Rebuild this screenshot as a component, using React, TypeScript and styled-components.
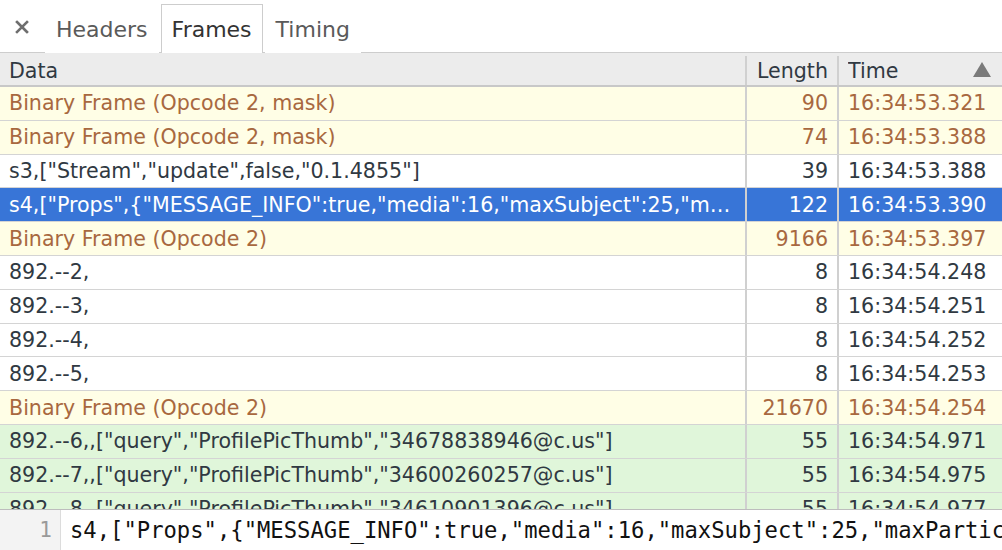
import React from "react";
import styled, { createGlobalStyle } from "styled-components";

const Global = createGlobalStyle`
  html, body { margin: 0; padding: 0; background: #fff; }
  body { font-family: "DejaVu Sans", "Liberation Sans", sans-serif; overflow: hidden; }
  #root { width: 1002px; height: 550px; }
`;

const Page = styled.div`
  width: 1002px;
  height: 550px;
  display: flex;
  flex-direction: column;
  overflow: hidden;
  background: #fff;
`;

const TabBar = styled.div`
  height: 52px;
  flex: none;
  display: flex;
  align-items: flex-end;
  border-bottom: 1px solid #cdcdcd;
  padding-left: 12px;
`;

const Close = styled.div`
  width: 20px;
  height: 49px;
  display: flex;
  align-items: center;
  justify-content: center;
  color: #6e6e6e;
  margin-right: 13px;
  padding-bottom: 1px;
  box-sizing: border-box;
  svg { display: block; }
`;

const Tab = styled.div<{ $active?: boolean }>`
  height: 49px;
  box-sizing: border-box;
  display: flex;
  align-items: center;
  padding: 0 10px 0 10px;
  margin-right: 2px;
  margin-bottom: -1px;
  font-size: 22px;
  color: ${(p) => (p.$active ? "#333" : "#5a5a5a")};
  background: #fff;
  border: 1px solid ${(p) => (p.$active ? "#cdcdcd" : "transparent")};
  border-bottom: none;
`;

const Table = styled.div`
  flex: 1;
  min-height: 0;
  overflow: hidden;
  font-size: 20.6px;
`;

const Row = styled.div<{ $kind?: "header" | "binary" | "sel" | "green" | "plain" }>`
  display: grid;
  grid-template-columns: 745px 92px 1fr;
  height: ${(p) => (p.$kind === "header" ? "34px" : "33.8px")};
  box-sizing: border-box;
  padding-top: ${(p) => (p.$kind === "header" ? "3px" : "0")};
  border-bottom: ${(p) => (p.$kind === "header" ? "2px solid #c8c8c8" : "1.5px solid #d4d4d4")};
  background: ${(p) =>
    p.$kind === "header"
      ? "#ececec"
      : p.$kind === "binary"
      ? "#fffee6"
      : p.$kind === "sel"
      ? "#3875d7"
      : p.$kind === "green"
      ? "#e0f6da"
      : "#fff"};
  color: ${(p) =>
    p.$kind === "binary" ? "#a8683f" : p.$kind === "sel" ? "#fff" : "#303942"};
`;

const Cell = styled.div<{ $right?: boolean; $first?: boolean }>`
  display: flex;
  align-items: center;
  justify-content: ${(p) => (p.$right ? "flex-end" : "space-between")};
  padding: 0 9px;
  white-space: nowrap;
  overflow: hidden;
  border-left: ${(p) => (p.$first ? "none" : "2px solid #d0d0d0")};
  min-width: 0;
`;

const CellText = styled.span`
  overflow: hidden;
  text-overflow: ellipsis;
  white-space: nowrap;
  display: block;
`;

const SortArrow = styled.span`
  flex: none;
  width: 0;
  height: 0;
  border-left: 9px solid transparent;
  border-right: 9px solid transparent;
  border-bottom: 15px solid #7a7a7a;
  margin-right: 2px;
  margin-bottom: 3px;
`;

const Editor = styled.div`
  flex: none;
  height: 40px;
  border-top: 1px solid #bdbdbd;
  display: flex;
  background: #fff;
`;

const Gutter = styled.div`
  width: 61px;
  flex: none;
  background: #f3f3f3;
  border-right: 1px solid #dcdcdc;
  display: flex;
  align-items: center;
  justify-content: flex-end;
  padding-right: 8px;
  box-sizing: border-box;
  font-family: "DejaVu Sans Mono", "Liberation Mono", monospace;
  font-size: 21px;
  color: #999;
`;

const Code = styled.div`
  display: flex;
  align-items: center;
  padding-left: 9px;
  white-space: pre;
  font-family: "DejaVu Sans Mono", "Liberation Mono", monospace;
  font-size: 22.2px;
  color: #111;
  overflow: hidden;
`;

type Kind = "binary" | "sel" | "green" | "plain";
const rows: { d: string; l: string; t: string; k: Kind }[] = [
  { d: "Binary Frame (Opcode 2, mask)", l: "90", t: "16:34:53.321", k: "binary" },
  { d: "Binary Frame (Opcode 2, mask)", l: "74", t: "16:34:53.388", k: "binary" },
  { d: 's3,["Stream","update",false,"0.1.4855"]', l: "39", t: "16:34:53.388", k: "plain" },
  {
    d: 's4,["Props",{"MESSAGE_INFO":true,"media":16,"maxSubject":25,"maxParticipants":257,"imageMaxKBytes":1024}]',
    l: "122",
    t: "16:34:53.390",
    k: "sel",
  },
  { d: "Binary Frame (Opcode 2)", l: "9166", t: "16:34:53.397", k: "binary" },
  { d: "892.--2,", l: "8", t: "16:34:54.248", k: "plain" },
  { d: "892.--3,", l: "8", t: "16:34:54.251", k: "plain" },
  { d: "892.--4,", l: "8", t: "16:34:54.252", k: "plain" },
  { d: "892.--5,", l: "8", t: "16:34:54.253", k: "plain" },
  { d: "Binary Frame (Opcode 2)", l: "21670", t: "16:34:54.254", k: "binary" },
  { d: '892.--6,,["query","ProfilePicThumb","34678838946@c.us"]', l: "55", t: "16:34:54.971", k: "green" },
  { d: '892.--7,,["query","ProfilePicThumb","34600260257@c.us"]', l: "55", t: "16:34:54.975", k: "green" },
  { d: '892.--8,,["query","ProfilePicThumb","34610901396@c.us"]', l: "55", t: "16:34:54.977", k: "green" },
];

export default function App() {
  return (
    <Page>
      <Global />
      <TabBar>
        <Close>
          <svg width="14" height="14" viewBox="0 0 14 14">
            <path d="M2 2 L12 12 M12 2 L2 12" stroke="#6e6e6e" strokeWidth="2.6" strokeLinecap="square" />
          </svg>
        </Close>
        <Tab>Headers</Tab>
        <Tab $active>Frames</Tab>
        <Tab>Timing</Tab>
      </TabBar>
      <Table>
        <Row $kind="header">
          <Cell $first>
            <CellText>Data</CellText>
          </Cell>
          <Cell $right>
            <CellText>Length</CellText>
          </Cell>
          <Cell>
            <CellText>Time</CellText>
            <SortArrow />
          </Cell>
        </Row>
        {rows.map((r, i) => (
          <Row key={i} $kind={r.k}>
            <Cell $first>
              <CellText>{r.d}</CellText>
            </Cell>
            <Cell $right>
              <CellText>{r.l}</CellText>
            </Cell>
            <Cell>
              <CellText>{r.t}</CellText>
            </Cell>
          </Row>
        ))}
      </Table>
      <Editor>
        <Gutter>1</Gutter>
        <Code>{'s4,["Props",{"MESSAGE_INFO":true,"media":16,"maxSubject":25,"maxParticipants":257}]'}</Code>
      </Editor>
    </Page>
  );
}
